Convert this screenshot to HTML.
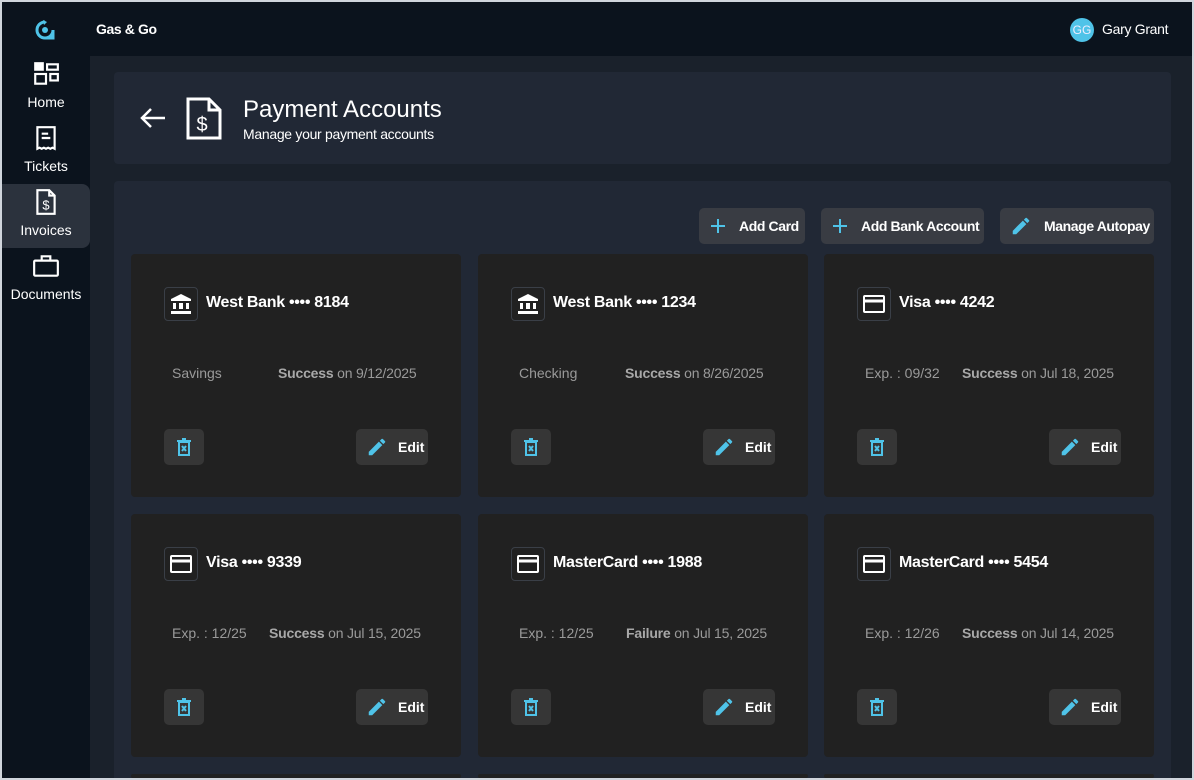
<!DOCTYPE html>
<html><head><meta charset="utf-8"><style>
*{box-sizing:border-box;margin:0;padding:0}
body{width:1194px;height:780px;overflow:hidden;background:#d0d5dc;font-family:"Liberation Sans",sans-serif;color:#fff;position:relative}
.frame{position:absolute;left:2px;top:2px;width:1190px;height:776px;background:#1a212b;overflow:hidden}
.top{position:absolute;left:0;top:0;width:1190px;height:54px;background:#0b131d}
.side{position:absolute;left:0;top:0;width:88px;height:778px;background:#0b131d}
.nav{position:absolute;left:0;width:88px;height:63px;text-align:center;font-size:14px}
.nav svg{display:block;margin:0 auto 6px}
.abs{position:absolute}
.panel{position:absolute;background:#212835;border-radius:4px}
.card{position:absolute;width:330px;height:243px;background:#212121;border-radius:4px}
.ic{position:absolute;left:33px;top:33px;width:34px;height:34px;border:1px solid #3a3f47;border-radius:4px;display:flex;align-items:center;justify-content:center}
.ttl{position:absolute;left:75px;top:40px;font-size:16px;font-weight:bold;letter-spacing:-0.3px;white-space:nowrap}
.l{position:absolute;top:111px;font-size:14px;color:#9a9a9a;white-space:nowrap}
.r{position:absolute;top:111px;font-size:14px;color:#9a9a9a;white-space:nowrap;letter-spacing:-0.2px}
.r b{color:#a8a8a8}
.del{position:absolute;left:33px;top:175px;width:40px;height:36px;background:#363636;border-radius:5px;display:flex;align-items:center;justify-content:center}
.edit{position:absolute;left:225px;top:175px;width:72px;height:36px;background:#363636;border-radius:5px;font-size:14px;font-weight:bold;display:flex;align-items:center;padding-left:10px;gap:10px}
.btn{position:absolute;top:206px;height:36px;background:#393c43;border-radius:5px;font-size:14px;font-weight:bold;display:flex;align-items:center;padding-left:10px;gap:12px;white-space:nowrap;letter-spacing:-0.4px}
</style></head><body><div class="frame">
<div class="top"></div>
<div class="side"></div>
<svg class="abs" style="left:32px;top:17px" width="22" height="22" viewBox="0 0 22 22"><path d="M11 3a8 8 0 1 0 8 8v8h-8" fill="none" stroke="#4fc3e8" stroke-width="3"/><circle cx="11" cy="11" r="3" fill="#4fc3e8"/><path d="M9 1l4 2-3 3" fill="#4fc3e8"/></svg>
<div class="abs" style="left:94px;top:19px;font-size:14px;font-weight:bold;letter-spacing:-0.4px">Gas &amp; Go</div>
<div class="abs" style="left:1068px;top:16px;width:24px;height:24px;border-radius:12px;background:#4fc3e8;font-size:12px;text-align:center;line-height:24px;color:#eef">GG</div>
<div class="abs" style="left:1100px;top:19px;font-size:14px;letter-spacing:-0.3px">Gary Grant</div>

<div class="nav" style="top:58px"><svg width="28" height="28" viewBox="0 0 26 26" fill="none" stroke="#fff" stroke-width="2"><rect x="3" y="3" width="7" height="6" fill="#fff"/><rect x="14" y="4" width="10" height="5"/><rect x="3" y="13" width="10" height="9"/><rect x="17" y="13" width="7" height="6"/></svg>Home</div>
<div class="nav" style="top:122px"><svg width="28" height="28" viewBox="0 0 26 26" fill="none" stroke="#fff" stroke-width="2"><path d="M5 3h16v20l-2-1-2 1-2-1-2 1-2-1-2 1-2-1-2 1z"/><path d="M9 9h6M9 13h8"/></svg>Tickets</div>
<div class="nav" style="top:182px;height:64px;background:#2b323d;border-radius:0 8px 8px 0;padding-top:4px"><svg width="28" height="28" viewBox="0 0 26 26" fill="none" stroke="#fff" stroke-width="2"><path d="M5 2h11l5 5v17H5z M16 2v5h5"/><text x="13" y="20" font-size="12" fill="#fff" stroke="none" text-anchor="middle" font-family="Liberation Sans">$</text></svg>Invoices</div>
<div class="nav" style="top:250px"><svg width="28" height="28" viewBox="0 0 26 26" fill="none" stroke="#fff" stroke-width="2"><rect x="2" y="8" width="22" height="14" rx="1"/><path d="M9 8V4h8v4"/></svg>Documents</div>

<div class="panel" style="left:112px;top:70px;width:1057px;height:92px">
<svg class="abs" style="left:25px;top:34px" width="28" height="24" viewBox="0 0 28 24" fill="none" stroke="#fff" stroke-width="2.5"><path d="M26 12H3M12 3l-9 9 9 9"/></svg>
<svg class="abs" style="left:70px;top:24px" width="40" height="46" viewBox="0 0 40 46" fill="none" stroke="#fff" stroke-width="3"><path d="M4 3h21l11 11v28H4z M25 3v11h11"/><text x="18" y="35" font-size="20" fill="#fff" stroke="none" text-anchor="middle" font-family="Liberation Sans">$</text></svg>
<div class="abs" style="left:129px;top:24px;font-size:24px">Payment Accounts</div>
<div class="abs" style="left:129px;top:54px;font-size:14px;letter-spacing:-0.3px">Manage your payment accounts</div>
</div>

<div class="panel" style="left:112px;top:179px;width:1057px;height:620px"></div>
<div class="btn" style="left:697px;width:106px"><svg width="18" height="18" viewBox="0 0 18 18" stroke="#4fc3e8" stroke-width="2"><path d="M9 2v14M2 9h14"/></svg>Add Card</div>
<div class="btn" style="left:819px;width:163px"><svg width="18" height="18" viewBox="0 0 18 18" stroke="#4fc3e8" stroke-width="2"><path d="M9 2v14M2 9h14"/></svg>Add Bank Account</div>
<div class="btn" style="left:998px;width:154px"><svg width="22" height="22" viewBox="0 0 24 24" fill="#4fc3e8"><path d="M3 17.25V21h3.75L17.8 9.94l-3.75-3.75zM20.7 7.04a1 1 0 0 0 0-1.41l-2.34-2.34a1 1 0 0 0-1.41 0l-1.83 1.83 3.75 3.75z"/></svg>Manage Autopay</div>
</div>
<div class="frame" style="background:none;pointer-events:none">
<div class="card" style="left:129px;top:252px"><div class="ic"><svg width="24" height="24" viewBox="0 0 24 24" fill="#fff"><path d="M12 2L2 7v2h20V7z M4 11h3v6H4z M10 11h4v6h-4z M17 11h3v6h-3z M2 19h20v3H2z"/></svg></div><div class="ttl">West Bank •••• 8184</div><div class="l" style="left:41px">Savings</div><div class="r" style="left:147px"><b>Success</b> on 9/12/2025</div><div class="del"><svg width="14" height="18" viewBox="0 0 14 18" fill="none" stroke="#4fc3e8" stroke-width="2"><path d="M0 3h14M5 1h4"/><rect x="2" y="4" width="10" height="13"/><path d="M5 8l4 5M9 8l-4 5"/></svg></div><div class="edit"><svg width="22" height="22" viewBox="0 0 24 24" fill="#4fc3e8"><path d="M3 17.25V21h3.75L17.8 9.94l-3.75-3.75zM20.7 7.04a1 1 0 0 0 0-1.41l-2.34-2.34a1 1 0 0 0-1.41 0l-1.83 1.83 3.75 3.75z"/></svg>Edit</div></div>
<div class="card" style="left:476px;top:252px"><div class="ic"><svg width="24" height="24" viewBox="0 0 24 24" fill="#fff"><path d="M12 2L2 7v2h20V7z M4 11h3v6H4z M10 11h4v6h-4z M17 11h3v6h-3z M2 19h20v3H2z"/></svg></div><div class="ttl">West Bank •••• 1234</div><div class="l" style="left:41px">Checking</div><div class="r" style="left:147px"><b>Success</b> on 8/26/2025</div><div class="del"><svg width="14" height="18" viewBox="0 0 14 18" fill="none" stroke="#4fc3e8" stroke-width="2"><path d="M0 3h14M5 1h4"/><rect x="2" y="4" width="10" height="13"/><path d="M5 8l4 5M9 8l-4 5"/></svg></div><div class="edit"><svg width="22" height="22" viewBox="0 0 24 24" fill="#4fc3e8"><path d="M3 17.25V21h3.75L17.8 9.94l-3.75-3.75zM20.7 7.04a1 1 0 0 0 0-1.41l-2.34-2.34a1 1 0 0 0-1.41 0l-1.83 1.83 3.75 3.75z"/></svg>Edit</div></div>
<div class="card" style="left:822px;top:252px"><div class="ic"><svg width="22" height="18" viewBox="0 0 22 18" fill="none" stroke="#fff" stroke-width="2"><rect x="1" y="1" width="20" height="16" rx="1"/><path d="M1 6h20" stroke-width="3"/></svg></div><div class="ttl">Visa •••• 4242</div><div class="l" style="left:41px">Exp. : 09/32</div><div class="r" style="left:138px"><b>Success</b> on Jul 18, 2025</div><div class="del"><svg width="14" height="18" viewBox="0 0 14 18" fill="none" stroke="#4fc3e8" stroke-width="2"><path d="M0 3h14M5 1h4"/><rect x="2" y="4" width="10" height="13"/><path d="M5 8l4 5M9 8l-4 5"/></svg></div><div class="edit"><svg width="22" height="22" viewBox="0 0 24 24" fill="#4fc3e8"><path d="M3 17.25V21h3.75L17.8 9.94l-3.75-3.75zM20.7 7.04a1 1 0 0 0 0-1.41l-2.34-2.34a1 1 0 0 0-1.41 0l-1.83 1.83 3.75 3.75z"/></svg>Edit</div></div>
<div class="card" style="left:129px;top:512px"><div class="ic"><svg width="22" height="18" viewBox="0 0 22 18" fill="none" stroke="#fff" stroke-width="2"><rect x="1" y="1" width="20" height="16" rx="1"/><path d="M1 6h20" stroke-width="3"/></svg></div><div class="ttl">Visa •••• 9339</div><div class="l" style="left:41px">Exp. : 12/25</div><div class="r" style="left:138px"><b>Success</b> on Jul 15, 2025</div><div class="del"><svg width="14" height="18" viewBox="0 0 14 18" fill="none" stroke="#4fc3e8" stroke-width="2"><path d="M0 3h14M5 1h4"/><rect x="2" y="4" width="10" height="13"/><path d="M5 8l4 5M9 8l-4 5"/></svg></div><div class="edit"><svg width="22" height="22" viewBox="0 0 24 24" fill="#4fc3e8"><path d="M3 17.25V21h3.75L17.8 9.94l-3.75-3.75zM20.7 7.04a1 1 0 0 0 0-1.41l-2.34-2.34a1 1 0 0 0-1.41 0l-1.83 1.83 3.75 3.75z"/></svg>Edit</div></div>
<div class="card" style="left:476px;top:512px"><div class="ic"><svg width="22" height="18" viewBox="0 0 22 18" fill="none" stroke="#fff" stroke-width="2"><rect x="1" y="1" width="20" height="16" rx="1"/><path d="M1 6h20" stroke-width="3"/></svg></div><div class="ttl">MasterCard •••• 1988</div><div class="l" style="left:41px">Exp. : 12/25</div><div class="r" style="left:148px"><b>Failure</b> on Jul 15, 2025</div><div class="del"><svg width="14" height="18" viewBox="0 0 14 18" fill="none" stroke="#4fc3e8" stroke-width="2"><path d="M0 3h14M5 1h4"/><rect x="2" y="4" width="10" height="13"/><path d="M5 8l4 5M9 8l-4 5"/></svg></div><div class="edit"><svg width="22" height="22" viewBox="0 0 24 24" fill="#4fc3e8"><path d="M3 17.25V21h3.75L17.8 9.94l-3.75-3.75zM20.7 7.04a1 1 0 0 0 0-1.41l-2.34-2.34a1 1 0 0 0-1.41 0l-1.83 1.83 3.75 3.75z"/></svg>Edit</div></div>
<div class="card" style="left:822px;top:512px"><div class="ic"><svg width="22" height="18" viewBox="0 0 22 18" fill="none" stroke="#fff" stroke-width="2"><rect x="1" y="1" width="20" height="16" rx="1"/><path d="M1 6h20" stroke-width="3"/></svg></div><div class="ttl">MasterCard •••• 5454</div><div class="l" style="left:41px">Exp. : 12/26</div><div class="r" style="left:138px"><b>Success</b> on Jul 14, 2025</div><div class="del"><svg width="14" height="18" viewBox="0 0 14 18" fill="none" stroke="#4fc3e8" stroke-width="2"><path d="M0 3h14M5 1h4"/><rect x="2" y="4" width="10" height="13"/><path d="M5 8l4 5M9 8l-4 5"/></svg></div><div class="edit"><svg width="22" height="22" viewBox="0 0 24 24" fill="#4fc3e8"><path d="M3 17.25V21h3.75L17.8 9.94l-3.75-3.75zM20.7 7.04a1 1 0 0 0 0-1.41l-2.34-2.34a1 1 0 0 0-1.41 0l-1.83 1.83 3.75 3.75z"/></svg>Edit</div></div>
<div class="card" style="left:129px;top:772px;height:4px"></div>
<div class="card" style="left:476px;top:772px;height:4px"></div>
<div class="card" style="left:822px;top:772px;height:4px"></div>
</div>
</body></html>
